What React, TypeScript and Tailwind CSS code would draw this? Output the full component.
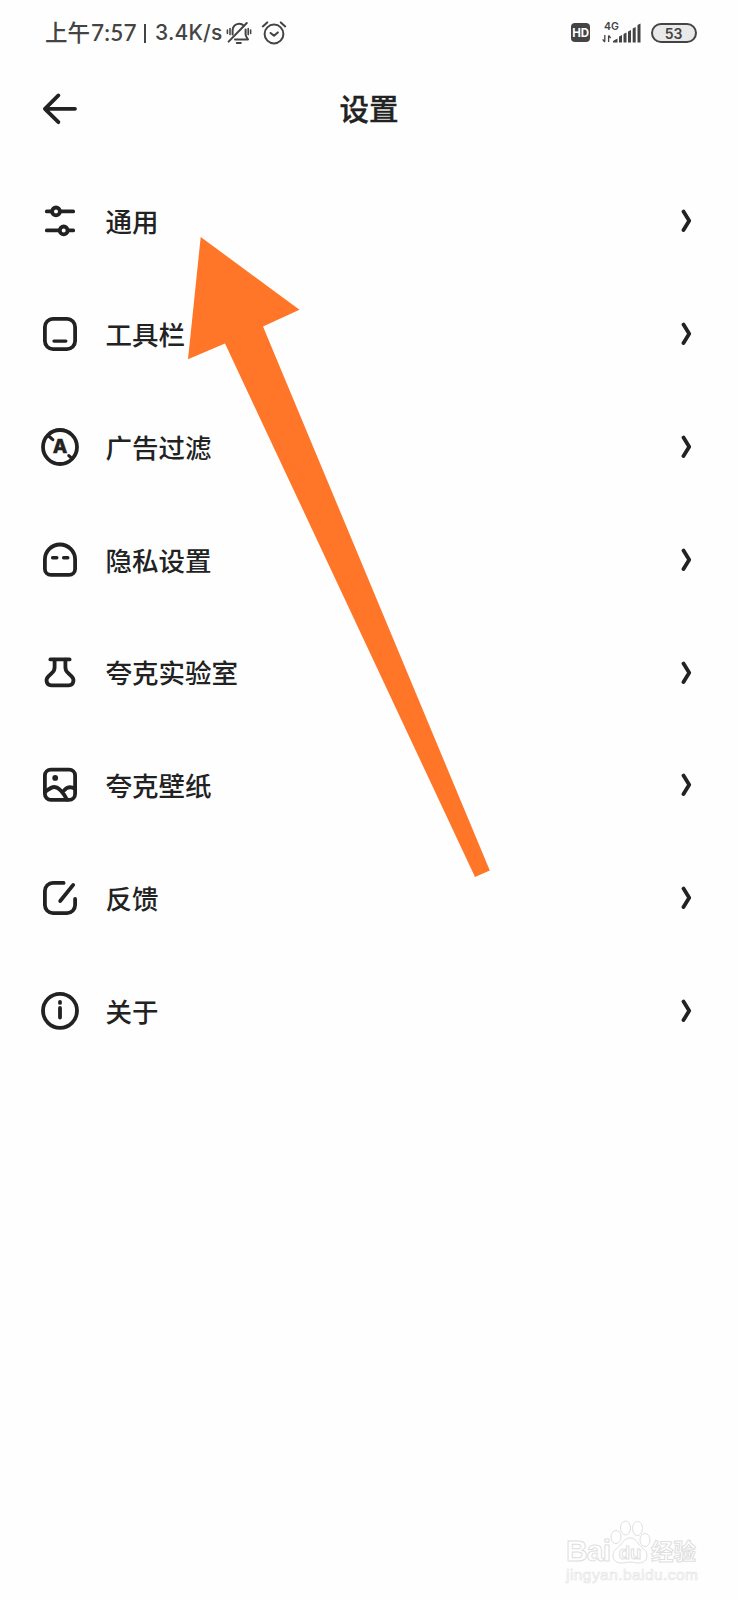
import React from 'react';

interface SettingItem {
  id: string;
  label: string;
  icon: React.ReactNode;
}

const fontFamily = "font-['Noto_Sans_CJK_SC',sans-serif]";

const Icon: React.FC<{ children: React.ReactNode }> = ({ children }) => (
  <svg
    className="w-10 h-10 shrink-0"
    viewBox="0 0 40 40"
    fill="none"
    stroke="currentColor"
    strokeWidth="3.8"
    strokeLinecap="round"
    strokeLinejoin="round"
  >
    {children}
  </svg>
);

const items: SettingItem[] = [
  {
    id: 'general',
    label: '通用',
    icon: (
      <Icon>
        <path d="M6.8 10.4h4.6M20.6 10.4h12.6M6.8 29.4h12.4M28.4 29.4h4.8" />
        <circle cx="16" cy="10.4" r="3.9" />
        <circle cx="23.7" cy="29.4" r="3.9" />
      </Icon>
    ),
  },
  {
    id: 'toolbar',
    label: '工具栏',
    icon: (
      <Icon>
        <rect x="4.9" y="4.9" width="30.2" height="30.2" rx="8" />
        <path d="M14 27.1h11.8" strokeWidth="3.4" />
      </Icon>
    ),
  },
  {
    id: 'adblock',
    label: '广告过滤',
    icon: (
      <Icon>
        <circle cx="20" cy="20" r="17" />
        <path d="M8.4 8.8l4.4 3.8M28.8 28.6l3.4 3" strokeWidth="3.2" />
        <text
          x="20"
          y="26.4"
          textAnchor="middle"
          fontSize="19"
          fontWeight="800"
          fill="currentColor"
          stroke="currentColor"
          strokeWidth="0.4"
          className="font-['Inter',sans-serif]"
        >
          A
        </text>
      </Icon>
    ),
  },
  {
    id: 'privacy',
    label: '隐私设置',
    icon: (
      <Icon>
        <path d="M4.9 19.6a15.1 15.1 0 0 1 30.2 0v9.3a6 6 0 0 1-6 6H10.9a6 6 0 0 1-6-6z" />
        <path d="M12.6 17.7h4.2M23.6 17.7h4.2" strokeWidth="3.4" />
      </Icon>
    ),
  },
  {
    id: 'lab',
    label: '夸克实验室',
    icon: (
      <Icon>
        <path d="M10.4 6.4h19.2" />
        <path d="M14.6 6.7v7.500c0 2.400-.7 4-2.600 5.700l-3.600 3.400c-1.500 1.500-2.100 3-1.800 5 .4 2.500 2 4.100 4.600 4.100h17.600c2.600 0 4.200-1.600 4.600-4.100.3-2-.3-3.500-1.800-5L28 19.900c-1.900-1.700-2.600-3.300-2.600-5.700V6.700" />
      </Icon>
    ),
  },
  {
    id: 'wallpaper',
    label: '夸克壁纸',
    icon: (
      <Icon>
        <rect x="4.9" y="4.7" width="30.2" height="30.2" rx="6" />
        <circle cx="15.2" cy="12.9" r="2.9" fill="currentColor" stroke="none" />
        <path d="M5 27c3.500-2.800 6.500-5 9.300-5 5.300 0 9.300 6.300 12.700 12.600M24 25.400c3.200-3.700 7-4 11-1.600" />
      </Icon>
    ),
  },
  {
    id: 'feedback',
    label: '反馈',
    icon: (
      <Icon>
        <path d="M23.6 4.9H12.9a8 8 0 0 0-8 8v14.2a8 8 0 0 0 8 8h14.2a8 8 0 0 0 8-8v-6.2" />
        <path d="M33.200 6.900L20.200 23" />
      </Icon>
    ),
  },
  {
    id: 'about',
    label: '关于',
    icon: (
      <Icon>
        <circle cx="20" cy="19.800" r="17" />
        <path d="M20 10.900v1M20 17v9.600" />
      </Icon>
    ),
  },
];

const StatusBar = () => (
  <div className="flex items-center h-[65px] pl-[45px] pr-[41px] text-[#444444]">
    <div className="flex items-center leading-none whitespace-pre">
      <span className="w-[46px] mb-[3px] text-[22.500px] font-medium">上午</span>
      <span className="w-[53px] pt-[1px] font-['Lato',sans-serif] font-semibold text-[22.500px] tracking-[0.2px]">7:57</span>
      <span className="w-[2px] h-[19px] mt-[1px] mr-[9px] bg-[#444444]" />
      <span className="w-[71px] font-['Inter',sans-serif] font-medium text-[21px] tracking-[0.200px]">3.4K/s</span>
    </div>
    <svg className="w-[26px] h-6" viewBox="0 0 26 24" fill="none" stroke="currentColor" strokeWidth="2" strokeLinecap="round" strokeLinejoin="round">
      <path d="M17.800 4.600C14.400 1 7 2.600 6.600 9.200v4.400M19.600 8.400v4.800c0 2.400 1.600 3.600 2.400 5.200H9" />
      <path d="M20.800 2L2.600 20.600M10.800 22h4" />
      <path d="M1.400 9v3.400M4 7.600v6M22.200 7.600v6M24.600 9v3.400" strokeWidth="1.600" />
    </svg>
    <svg className="w-[26px] h-6 ml-[8.500px]" viewBox="0 0 26 24" fill="none" stroke="currentColor" strokeWidth="2" strokeLinecap="round" strokeLinejoin="round">
      <circle cx="13" cy="13" r="9.400" />
      <path d="M9.600 12l3.400 2.800 3.800-3.400M1.800 5.400l4.400-4M24.200 5.400l-4.400-4" />
    </svg>
    <div className="flex items-center ml-auto">
      <span className="flex items-center justify-center w-[19px] h-[19px] mr-[1px] pt-[2px] rounded-[4px] bg-[#444444] text-white font-['Inter',sans-serif] font-bold text-[11.500px] leading-none tracking-[-0.300px]">
        HD
      </span>
      <svg className="w-[40px] h-5 ml-[11px] mr-[2px] overflow-visible" viewBox="0 0 40 20" fill="currentColor">
        <text x="2" y="7" fontSize="10.500" fontWeight="600" className="font-['Inter',sans-serif]">4G</text>
        <path d="M2.800 12v6.600M.6 16.400l2.200 2.600M6.600 19v-6.600M6.600 12.400l2 2.600" stroke="currentColor" strokeWidth="1.300" fill="none" />
        <path d="M11 19.500v-1.500l4.500-2.500v4zM17 19.500v-6l3-1.500v7.500zM21.500 19.500v-8.500l3-1.500v10zM26 19.500V8.500l3-1.500v12.500zM30.700 19.500V5.500l3-1.500v15.500zM35.500 19.500V2l3-1.500v19z" />
      </svg>
      <span className="flex items-center justify-center w-[46px] h-5 ml-[7px] pt-[2px] pr-[1px] rounded-full border-2 border-[#444444] bg-[#e9e9e9] font-['Inter',sans-serif] font-semibold text-[14px] leading-none">
        53
      </span>
    </div>
  </div>
);

const Header = () => (
  <div className="grid grid-cols-[1fr_auto_1fr] items-center h-[88px] px-10 text-[#222222]">
    <svg className="w-10 h-10" viewBox="0 0 40 40" fill="none" stroke="currentColor" strokeWidth="3.800" strokeLinecap="round" strokeLinejoin="round">
      <path d="M35 19.800H4.900M18.400 6.400L4.900 19.800l13.500 13.400" />
    </svg>
    <h1 className="mb-[3px] text-[29.500px] leading-none font-medium [-webkit-text-stroke:0.400px_#222222]">设置</h1>
  </div>
);

const Watermark = () => (
  <svg className="w-[140px] h-[70px] mt-auto ml-auto mr-[36px] mb-[12px]" viewBox="562 1518 140 70" fill="#ffffff" stroke="#dfdfdf" strokeWidth="1">
    <text x="566" y="1561" fontSize="30" fontWeight="700" textLength="45" className="font-['Liberation_Sans',sans-serif]">Bai</text>
    <ellipse cx="616" cy="1537" rx="5" ry="6.500" />
    <ellipse cx="625.500" cy="1528" rx="5" ry="7" />
    <ellipse cx="637.500" cy="1528.500" rx="5" ry="7" />
    <ellipse cx="645" cy="1540" rx="5" ry="6.500" />
    <path d="M630 1538c-6 0-7.500 5.500-11 8.500s-6 5-6 9c0 5 4 7.500 8.500 7.500 3 0 5-1 8.500-1s5.500 1 8.500 1c5 0 8.500-2.500 8.500-7.500 0-4-2.500-6-6-9s-5-8.500-11-8.500z" />
    <text x="630" y="1559" textAnchor="middle" fontSize="18.500" fontWeight="700" className="font-['Liberation_Sans',sans-serif]">du</text>
    <text x="651" y="1560" fontSize="22.500" fontWeight="700">经验</text>
    <text x="566" y="1579.500" fontSize="15.500" textLength="132" stroke="#e6e6e6" strokeWidth="0.700" className="font-['Liberation_Sans',sans-serif]">jingyan.baidu.com</text>
  </svg>
);

const App: React.FC = () => {
  return (
    <div className={`relative flex flex-col w-[738px] h-[1600px] overflow-hidden bg-[#fefefe] ${fontFamily}`}>
      <StatusBar />
      <Header />
      <ul className="pt-3 text-[#222222]">
        {items.map((item) => (
          <li key={item.id} className="flex items-center h-[112.800px] pl-10 pr-[45px]">
            {item.icon}
            <span className="ml-[25.500px] text-[26.500px] leading-none font-medium">{item.label}</span>
            <svg className="w-3 h-6 ml-auto" viewBox="0 0 12 24" fill="none" stroke="currentColor" strokeWidth="3.800" strokeLinecap="round" strokeLinejoin="round">
              <path d="M2.500 2.500l5.700 9.300-5.700 9.300" />
            </svg>
          </li>
        ))}
      </ul>
      <Watermark />
      <svg className="absolute left-0 top-0 w-full h-full pointer-events-none" viewBox="0 0 738 1600">
        <path d="M200.700 237L299.500 309.700L263 326.500L489.800 870.500L475 877L225 343.500L188 359.300Z" fill="#ff7628" />
      </svg>
    </div>
  );
};

export default App;
